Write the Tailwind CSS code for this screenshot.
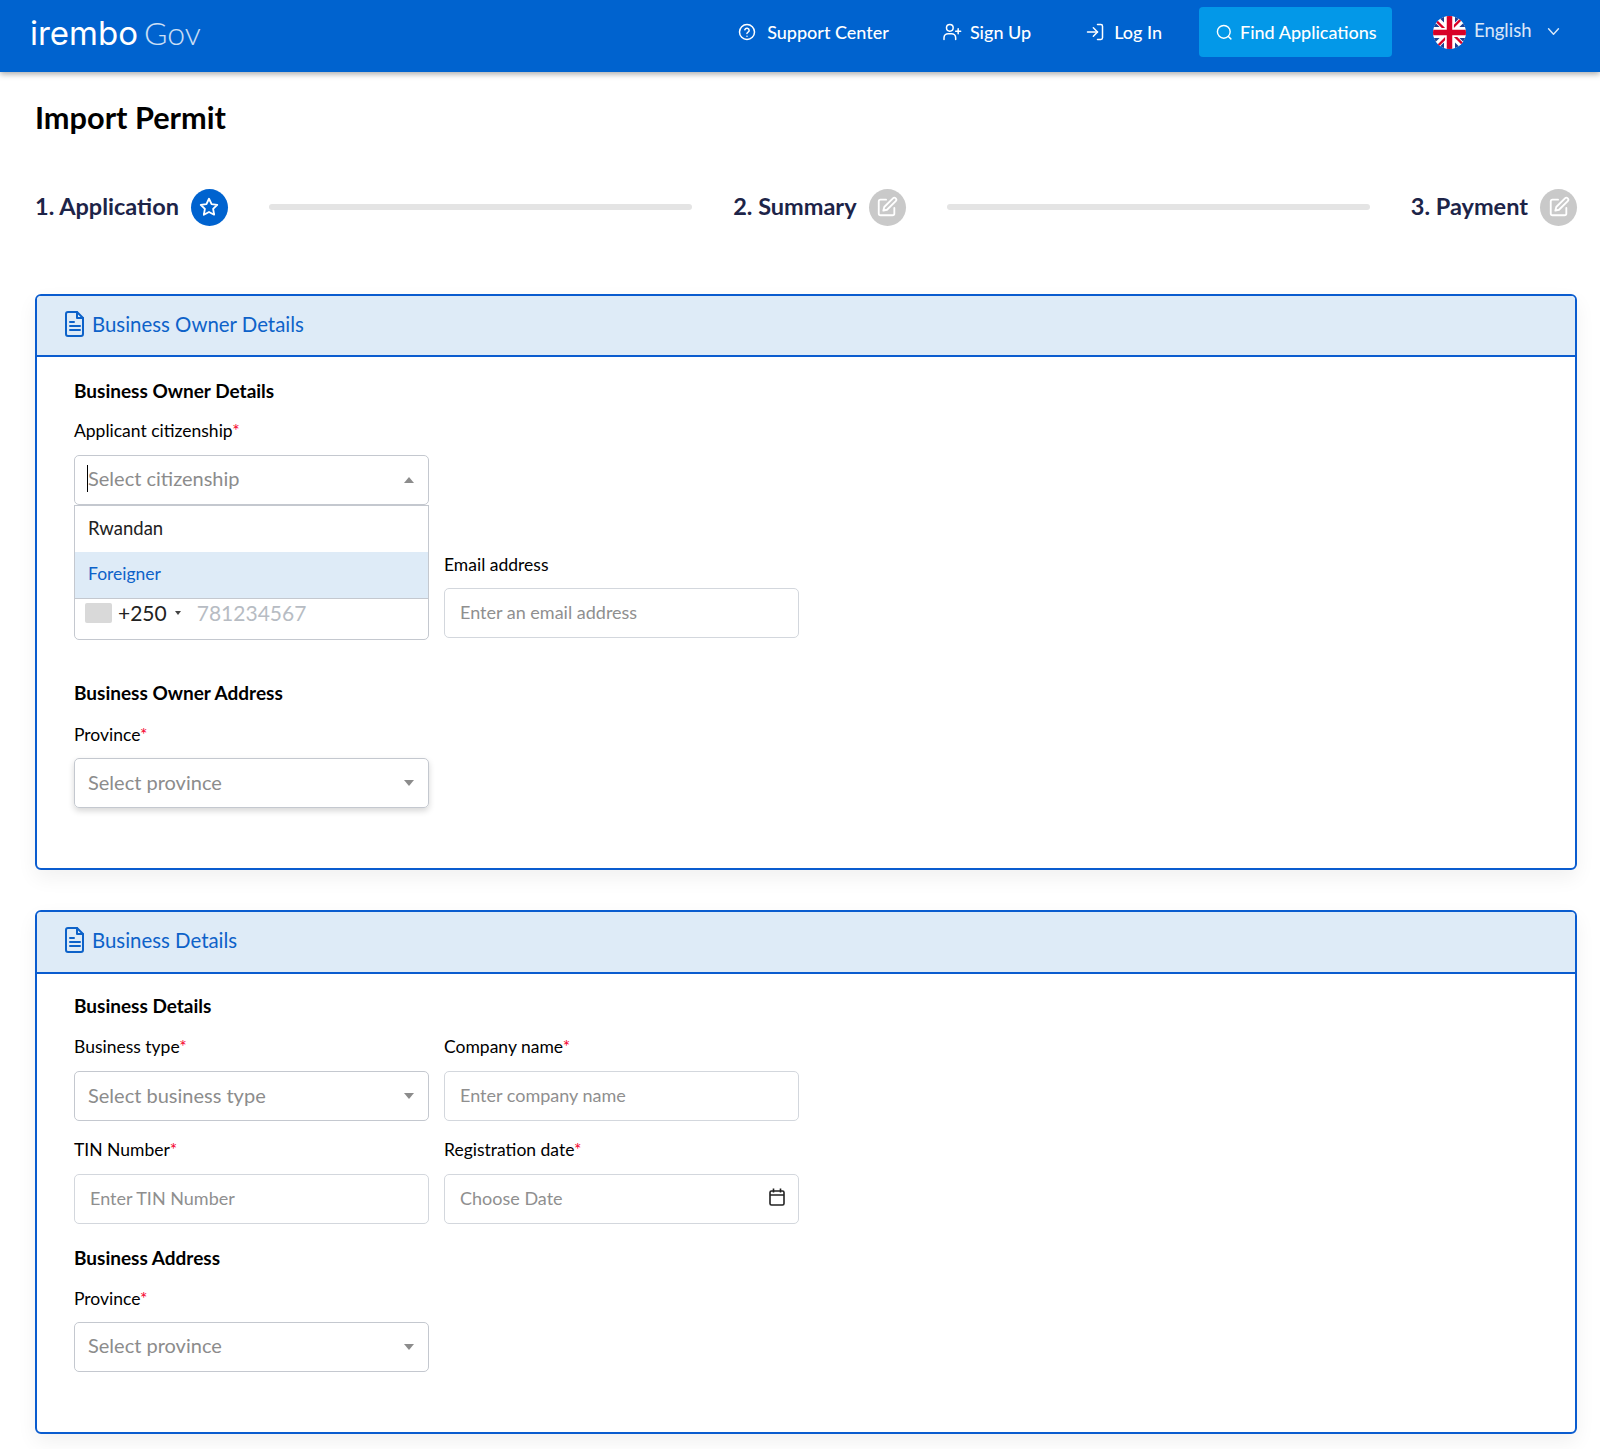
<!DOCTYPE html>
<html lang="en">
<head>
<meta charset="utf-8">
<title>Import Permit</title>
<script src="https://cdn.jsdelivr.net/npm/@tailwindcss/browser@4"></script>
</head>
<body class="bg-white font-['Lato',sans-serif] text-black">
<div class="w-[1600px] h-[1449px] overflow-hidden relative">
  <header class="h-[72px] bg-[#0063cf] shadow-[0_2px_6px_rgba(0,0,0,0.35)] flex items-center relative z-10 text-white">
    <div class="ml-[30px] flex items-baseline mt-[-5px]">
      <span class="text-[33px] leading-none font-normal font-['Inter',sans-serif]">irembo</span>
      <span class="text-[32px] leading-none font-light ml-[6px] text-white/80">Gov</span>
    </div>
    <nav class="ml-auto flex items-center text-[18px] font-medium h-[50px] mt-[-8px]">
      <a class="flex items-center"><svg class="w-[18px] h-[18px] mr-[11px]" viewBox="0 0 24 24" fill="none" stroke="currentColor" stroke-width="2" stroke-linecap="round" stroke-linejoin="round"><circle cx="12" cy="12" r="10"/><path d="M9.1 9a3 3 0 0 1 5.8 1c0 2-3 2.5-3 4"/><path d="M12 17.5h.01"/></svg>Support Center</a>
      <a class="flex items-center ml-[52px]"><svg class="w-[21px] h-[20px] mr-[8px]" viewBox="0 0 24 24" fill="none" stroke="currentColor" stroke-width="1.8" stroke-linecap="round" stroke-linejoin="round"><path d="M3 21v-2a5 5 0 0 1 5-5h4a5 5 0 0 1 5 5v2"/><circle cx="10" cy="7" r="4"/><path d="M20 8v6M17 11h6"/></svg>Sign Up</a>
      <a class="flex items-center ml-[54px]"><svg class="w-[20px] h-[20px] mr-[9px]" viewBox="0 0 24 24" fill="none" stroke="currentColor" stroke-width="1.8" stroke-linecap="round" stroke-linejoin="round"><path d="M15 3h4a2 2 0 0 1 2 2v14a2 2 0 0 1-2 2h-4"/><path d="M10 17l5-5-5-5"/><path d="M15 12H3"/></svg>Log In</a>
      <a class="flex items-center h-[50px] ml-[37px] w-[193px] pl-[17px] bg-[#0398e8] rounded-[4px]"><svg class="w-[17px] h-[17px] mr-[7px]" viewBox="0 0 24 24" fill="none" stroke="currentColor" stroke-width="2" stroke-linecap="round"><circle cx="11" cy="11" r="9"/><path d="M21 21l-3.5-3.5"/></svg>Find Applications</a>
      <a class="flex items-center ml-[41px] w-[167px] mt-[-2px] text-[18.5px] text-white/85 font-normal">
        <svg class="w-[33px] h-[33px] mr-[8px] mt-[2px]" viewBox="0 0 60 60"><defs><clipPath id="flagclip"><circle cx="30" cy="30" r="30"/></clipPath></defs><g clip-path="url(#flagclip)"><rect width="60" height="60" fill="#fff"/><path d="M8 0h12v12zM40 0h12L40 12zM0 8l12 12H0zM60 8L48 20h12zM0 40h12L0 52zM60 40H48l12 12zM8 60l12-12v12zM52 60L40 48v12z" fill="#1c3f94"/><path d="M0 0l22 22h-6L0 6zM60 60L38 38h6l16 16zM60 0L38 22v-6L54 0zM0 60l22-22v6L6 60z" fill="#d80027"/><path d="M25 0h10v25h25v10H35v25H25V35H0V25h25z" fill="#d80027"/></g></svg>
        English
        <svg class="w-[17px] h-[17px] ml-[13px]" viewBox="0 0 24 24" fill="none" stroke="currentColor" stroke-width="2" stroke-linecap="round" stroke-linejoin="round"><path d="M5 8l7 8 7-8"/></svg>
      </a>
    </nav>
  </header>

  <main class="pl-[35px] pr-[23px]">
    <h1 class="text-[30.7px] leading-[36px] font-bold mt-[28px] h-[36px]">Import Permit</h1>

    <div class="flex items-center h-[38px] mt-[52px] text-[23.5px] font-bold text-[#1d2448]">
      <span>1. Application</span>
      <span class="w-[37px] h-[37px] rounded-full bg-[#0063cf] ml-[12px] flex items-center justify-center shrink-0"><svg class="w-[22px] h-[22px]" viewBox="0 0 24 24" fill="none" stroke="#fff" stroke-width="2" stroke-linejoin="round"><path d="M12 3l2.8 5.8 6.2.9-4.5 4.4 1.1 6.3L12 17.4l-5.6 3 1.1-6.3L3 9.7l6.2-.9z"/></svg></span>
      <span class="flex-1 h-[6px] rounded-full bg-[#e4e4e4] mx-[41px]"></span>
      <span>2. Summary</span>
      <span class="w-[37px] h-[37px] rounded-full bg-[#c9c9c9] ml-[12px] flex items-center justify-center shrink-0"><svg class="w-[22px] h-[22px]" viewBox="0 0 24 24" fill="none" stroke="#fff" stroke-width="2" stroke-linecap="round" stroke-linejoin="round"><path d="M11 4H5a2 2 0 0 0-2 2v13a2 2 0 0 0 2 2h13a2 2 0 0 0 2-2v-6"/><path d="M18.5 2.5a2.1 2.1 0 0 1 3 3L12 15l-4 1 1-4z"/></svg></span>
      <span class="flex-1 h-[6px] rounded-full bg-[#e4e4e4] mx-[41px]"></span>
      <span>3. Payment</span>
      <span class="w-[37px] h-[37px] rounded-full bg-[#c9c9c9] ml-[12px] flex items-center justify-center shrink-0"><svg class="w-[22px] h-[22px]" viewBox="0 0 24 24" fill="none" stroke="#fff" stroke-width="2" stroke-linecap="round" stroke-linejoin="round"><path d="M11 4H5a2 2 0 0 0-2 2v13a2 2 0 0 0 2 2h13a2 2 0 0 0 2-2v-6"/><path d="M18.5 2.5a2.1 2.1 0 0 1 3 3L12 15l-4 1 1-4z"/></svg></span>
    </div>

    <!-- Card 1 -->
    <section class="mt-[68px] h-[576px] border-2 border-[#0a5ccf] rounded-[6px] shadow-[0_8px_20px_rgba(0,0,0,0.06)] overflow-hidden">
      <div class="h-[61px] bg-[#deebf7] border-b-2 border-[#0a5ccf] flex items-center pl-[28px] pb-[3px] text-[20.4px] text-[#0d62c9]">
        <svg class="w-[20px] h-[26px] mr-[7px] mt-[-1px]" viewBox="0 0 20 26" fill="none" stroke="currentColor" stroke-width="2" stroke-linejoin="round" stroke-linecap="round"><path d="M3 1h9l6 6v16a2 2 0 0 1-2 2H3a2 2 0 0 1-2-2V3a2 2 0 0 1 2-2z"/><path d="M12 1v6h6M5 11h4M5 15h10M5 19h10"/></svg>
        Business Owner Details
      </div>
      <div class="pl-[37px] relative">
        <h3 class="text-[19px] font-bold leading-[24px] mt-[22px]">Business Owner Details</h3>
        <label class="block text-[17.5px] leading-[24px] mt-[16px]">Applicant citizenship<span class="text-[#f5002d]">*</span></label>
        <div class="w-[355px] h-[50px] mt-[12px] border border-[#c4c8cf] rounded-[5px] flex items-center pl-[12px] pr-[14px] pb-[4px] text-[20px] text-[#8c8c8c]">
          <span class="w-[1px] h-[27px] bg-black"></span><span class="flex-1">Select citizenship</span>
          <span class="w-0 h-0 border-x-[5px] border-x-transparent border-b-[6px] border-b-[#8c8c8c] mt-[4px]"></span>
        </div>
        <div class="absolute z-20 left-[37px] top-[126px] w-[355px] h-[94px] bg-white border border-[#c4c8cf]">
          <div class="h-[46px] flex items-center pl-[13px] pb-[1px] text-[18.5px] text-[#222]">Rwandan</div>
          <div class="h-[46px] flex items-center pl-[13px] pb-[1px] text-[17.5px] bg-[#deebf7] text-[#0d62c9]">Foreigner</div>
        </div>
        <div class="flex gap-[15px] mt-[48px] items-start">
          <div class="w-[355px] h-[52px] mt-[35px] border border-[#c4c8cf] rounded-[5px] rounded-t-none flex items-start pt-[10px] pl-[10px] text-[21px] leading-[28px]">
            <span class="w-[27px] h-[20px] bg-[#d9d9d9] mt-[4px] rounded-[2px]"></span>
            <span class="ml-[6px] text-[#222]">+250</span>
            <span class="ml-[8px] mt-[12px] w-0 h-0 border-x-[3px] border-x-transparent border-t-[4px] border-t-[#444]"></span>
            <span class="ml-[16px] text-[#b7bcc3]">781234567</span>
          </div>
          <div>
            <label class="block text-[17.5px] leading-[24px]">Email address</label>
            <div class="w-[355px] h-[50px] mt-[11px] border border-[#d3d7dd] rounded-[5px] flex items-center pl-[15px] pb-[1px] text-[18px] text-[#8f8f8f]">Enter an email address</div>
          </div>
        </div>
        <h3 class="text-[19px] font-bold leading-[24px] mt-[41px]">Business Owner Address</h3>
        <label class="block text-[17.5px] leading-[24px] mt-[18px]">Province<span class="text-[#f5002d]">*</span></label>
        <div class="w-[355px] h-[50px] mt-[11px] border border-[#c4c8cf] rounded-[5px] shadow-[0_3px_6px_rgba(0,0,0,0.16)] flex items-center pl-[13px] pr-[14px] text-[20px] text-[#8c8c8c]">
          <span class="flex-1 mb-[2px]">Select province</span>
          <span class="w-0 h-0 border-x-[5px] border-x-transparent border-t-[6px] border-t-[#8c8c8c]"></span>
        </div>
      </div>
    </section>

    <!-- Card 2 -->
    <section class="mt-[40px] h-[524px] border-2 border-[#0a5ccf] rounded-[6px] shadow-[0_8px_20px_rgba(0,0,0,0.06)] overflow-hidden">
      <div class="h-[62px] bg-[#deebf7] border-b-2 border-[#0a5ccf] flex items-center pl-[28px] pb-[4px] text-[20.4px] text-[#0d62c9]">
        <svg class="w-[20px] h-[26px] mr-[7px] mt-[-1px]" viewBox="0 0 20 26" fill="none" stroke="currentColor" stroke-width="2" stroke-linejoin="round" stroke-linecap="round"><path d="M3 1h9l6 6v16a2 2 0 0 1-2 2H3a2 2 0 0 1-2-2V3a2 2 0 0 1 2-2z"/><path d="M12 1v6h6M5 11h4M5 15h10M5 19h10"/></svg>
        Business Details
      </div>
      <div class="pl-[37px]">
        <h3 class="text-[19px] font-bold leading-[24px] mt-[20px]">Business Details</h3>
        <div class="grid grid-cols-[355px_355px] gap-x-[15px] gap-y-[17px] mt-[17px]">
          <div>
            <label class="block text-[17.5px] leading-[24px]">Business type<span class="text-[#f5002d]">*</span></label>
            <div class="h-[50px] mt-[12px] border border-[#c4c8cf] rounded-[5px] flex items-center pl-[13px] pr-[14px] text-[20px] text-[#8c8c8c]"><span class="flex-1 mb-[3px]">Select business type</span><span class="w-0 h-0 border-x-[5px] border-x-transparent border-t-[6px] border-t-[#8c8c8c]"></span></div>
          </div>
          <div>
            <label class="block text-[17.5px] leading-[24px]">Company name<span class="text-[#f5002d]">*</span></label>
            <div class="h-[50px] mt-[12px] border border-[#d3d7dd] rounded-[5px] flex items-center pl-[15px] pb-[1px] text-[18px] text-[#8f8f8f]">Enter company name</div>
          </div>
          <div>
            <label class="block text-[17.5px] leading-[24px]">TIN Number<span class="text-[#f5002d]">*</span></label>
            <div class="h-[50px] mt-[12px] border border-[#d3d7dd] rounded-[5px] flex items-center pl-[15px] pb-[2px] text-[18px] text-[#8f8f8f]">Enter TIN Number</div>
          </div>
          <div>
            <label class="block text-[17.5px] leading-[24px]">Registration date<span class="text-[#f5002d]">*</span></label>
            <div class="h-[50px] mt-[12px] border border-[#d3d7dd] rounded-[5px] flex items-center pl-[15px] pr-[13px] pb-[2px] text-[18px] text-[#8f8f8f]"><span class="flex-1">Choose Date</span>
              <svg class="w-[16px] h-[18px] mt-[-3px]" viewBox="0 0 16 18" fill="none" stroke="#222" stroke-width="1.6"><rect x="1" y="3" width="14" height="14" rx="1.5"/><path d="M1 7h14M4.5 0.5v4M11.5 0.5v4"/></svg>
            </div>
          </div>
        </div>
        <h3 class="text-[19px] font-bold leading-[24px] mt-[22px]">Business Address</h3>
        <label class="block text-[17.5px] leading-[24px] mt-[17px]">Province<span class="text-[#f5002d]">*</span></label>
        <div class="w-[355px] h-[50px] mt-[11px] border border-[#c4c8cf] rounded-[5px] flex items-center pl-[13px] pr-[14px] text-[20px] text-[#8c8c8c]">
          <span class="flex-1 mb-[4px]">Select province</span>
          <span class="w-0 h-0 border-x-[5px] border-x-transparent border-t-[6px] border-t-[#8c8c8c]"></span>
        </div>
      </div>
    </section>
  </main>
</div>
</body>
</html>
